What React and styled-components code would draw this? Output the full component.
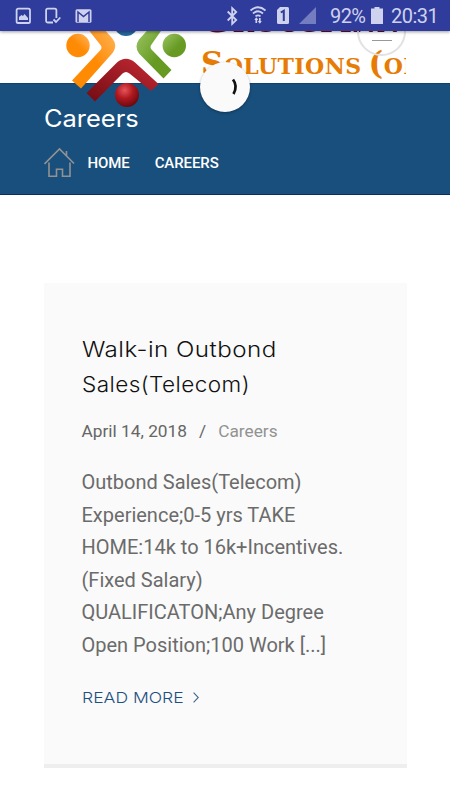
import styled, { createGlobalStyle } from "styled-components"

const App = () => {
  return (
    <>
      <GlobalStyle />
      <Screen>
        <StatusBar>
          <StatusIcons viewBox="0 0 110 31" width="110" height="31">
            <g fill="none" stroke="#ced2ee" strokeWidth="1.8">
              <rect x="16.6" y="8.6" width="13.4" height="14.4" rx="1.6" />
              <path d="M53 22.5h-5.3c-1 0-1.6-.5-1.6-1.5V10.2c0-1 .6-1.6 1.6-1.6h7.1c1 0 1.6.6 1.6 1.6V18" />
              <path d="M53.5 19.5l2.5 2.5 4.3-4.5" />
            </g>
            <path d="M19 20v-3l2.5-2 1.5 1 1.5-2 3.5 4v2z" fill="#ced2ee" />
            <rect x="75.5" y="9.3" width="16" height="13.5" rx="1.5" fill="#ced2ee" />
            <path d="M78 22V12l5.5 4.6L89 12v10" fill="none" stroke="#303c9b" strokeWidth="1.5" />
          </StatusIcons>
          <StatusRight>
            <svg viewBox="0 0 100 31" width="100" height="31">
              <path d="M2.7 11.5l8.5 8.5-4 3.8V8.2l4 3.8-8.5 8.5" fill="none" stroke="#ced2ee" strokeWidth="1.8" />
              <g fill="none" stroke="#ced2ee" strokeWidth="1.7">
                <path d="M25.5 10.5q7.5-6.5 15 0" />
                <path d="M28 13.5q5-4.5 10 0" />
                <path d="M30.5 16.3q2.5-2 5 0" />
                <path d="M31.3 23v-4.5M34.8 18v4.5" />
              </g>
              <path d="M29.3 20l2-2.7 2 2.7zM32.8 21l2 2.7 2-2.7z" fill="#ced2ee" />
              <path d="M55 7h7.5q1.5 0 1.5 1.5v14q0 1.5-1.5 1.5h-9q-1.5 0-1.5-1.5V10z" fill="#ced2ee" />
              <path d="M55.8 12.5l3-1.7V21" fill="none" stroke="#303c9b" strokeWidth="2" />
              <path d="M91 7v17H74z" fill="#737dc0" />
            </svg>
            <Percent>92%</Percent>
            <svg viewBox="0 0 12 31" width="12" height="31">
              <path d="M3.5 7h5v1.5H12V24H0V8.5h3.5z" fill="#ced2ee" />
            </svg>
            <Clock>20:31</Clock>
          </StatusRight>
        </StatusBar>

        <SiteHeader>
          <Logo>
            <LogoMark />
            <LogoText>
              <LogoLine $size={36.5} $color="#760812">Grouspinn</LogoLine>
              <LogoLine $size={31} $color="#e77c05">Solutions (or</LogoLine>
            </LogoText>
          </Logo>
          <MenuButton>
            <span />
          </MenuButton>
          <Loader>
            <svg viewBox="0 0 50 50" width="50" height="50">
              <path d="M33 17.5q5 6.5.5 14.5" fill="none" stroke="#111" strokeWidth="2.7" />
            </svg>
          </Loader>
        </SiteHeader>

        <PageTitle>
          <h1>
            <Wide $stretch={1.06}>Careers</Wide>
          </h1>
          <Breadcrumb>
            <svg viewBox="0 0 32 32" width="32" height="32" fill="none" stroke="#929292" strokeWidth="1.6">
              <path d="M.5 17L15.500 2 30 16.500M22.500 8.500V4" />
              <path d="M5 15.500v13.800h7.500v-7h6v7H26V15.500" />
            </svg>
            <Crumb>HOME</Crumb>
            <Crumb>CAREERS</Crumb>
          </Breadcrumb>
        </PageTitle>

        <Post>
          <PostTitle>
            <Wide $stretch={1.125}>Walk-in Outbond</Wide>
            <br />
            <Wide $stretch={1.05}>Sales(Telecom)</Wide>
          </PostTitle>
          <Meta>
            <span>April 14, 2018</span>
            <Slash>/</Slash>
            <Category>Careers</Category>
          </Meta>
          <Excerpt>
            Outbond Sales(Telecom) Experience;0-5 yrs TAKE HOME:14k to 16k+Incentives. (Fixed Salary)
            QUALIFICATON;Any Degree Open Position;100 Work [...]
          </Excerpt>
          <ReadMore>
            <Wide $stretch={1.17}>READ MORE</Wide>
            <svg viewBox="0 0 6 11" width="6" height="11" fill="none" stroke="#3b6790" strokeWidth="1.1">
              <path d="M.6.6l4.7 4.9L.6 10.4" />
            </svg>
          </ReadMore>
        </Post>
      </Screen>
    </>
  )
}

const LogoMark = () => (
  <Mark viewBox="0 0 126 80" width="126" height="80">
    <defs>
      <linearGradient id="orange" x1="0" y1="1" x2="1" y2="0">
        <stop offset="0.5" stopColor="#ff8b05" />
        <stop offset="1" stopColor="#ffb65c" />
      </linearGradient>
      <linearGradient id="green" x1="0" y1="0" x2="1" y2="1">
        <stop offset="0" stopColor="#9cc564" />
        <stop offset="0.6" stopColor="#669a22" />
      </linearGradient>
      <linearGradient id="red" x1="1" y1="0" x2="0" y2="1">
        <stop offset="0" stopColor="#c62a35" />
        <stop offset="1" stopColor="#720c12" />
      </linearGradient>
      <radialGradient id="redBall" cx="0.4" cy="0.3" r="0.7">
        <stop offset="0" stopColor="#e5555a" />
        <stop offset="0.5" stopColor="#b01820" />
        <stop offset="1" stopColor="#6c0a0e" />
      </radialGradient>
    </defs>
    <circle cx="61" cy="-7" r="12" fill="#24679c" />
    <circle cx="13" cy="14.5" r="11.7" fill="url(#orange)" />
    <path d="M22-3h16l9 10q6 7 1 14.5L16 57.5 7 49.5 35.5 19q2-2.5 0-5z" fill="url(#orange)" />
    <circle cx="109.3" cy="14.5" r="11.7" fill="url(#green)" />
    <path d="M98-3H84.5L74 8.500q-5 7 0 14L98.500 47.500l8-8.500L86.500 18.500q-2-2.500 0-5z" fill="url(#green)" />
    <path d="M21.5 62L52 31.500q9-7.500 18 0L93.500 53 86 60 64.500 42.500q-3.500-3-7 0L30 70.500z" fill="url(#red)" />
    <circle cx="62" cy="64" r="12" fill="url(#redBall)" />
  </Mark>
)

const GlobalStyle = createGlobalStyle`
  body {
    margin: 0;
    background-color: #fff;
    font-family: Roboto, sans-serif;
  }
`

const Screen = styled.div`
  width: 450px;
  height: 800px;
  overflow: hidden;
`

const Wide = styled.span`
  display: inline-block;
  transform: scaleX(${({ $stretch }) => $stretch});
  transform-origin: left center;
`

const StatusBar = styled.div`
  position: relative;
  z-index: 10;
  display: flex;
  justify-content: space-between;
  height: 31px;
  background-color: #303c9b;
  color: #ced2ee;
  box-shadow: 0 1px 3px #0006;
`

const StatusIcons = styled.svg`
  display: block;
`

const StatusRight = styled.div`
  display: flex;
  width: 225px;
  & svg {
    flex: none;
  }
`

const Percent = styled.span`
  width: 41px;
  margin-left: 5px;
  font-size: 20px;
  line-height: 33px;
  letter-spacing: -0.6px;
`

const Clock = styled.span`
  margin-left: 8px;
  font-size: 20px;
  line-height: 33px;
  letter-spacing: -0.5px;
`

const SiteHeader = styled.header`
  position: relative;
  height: 52px;
  background-color: #fff;
`

const Logo = styled.div`
  position: absolute;
  left: 65px;
  top: 0;
  z-index: 1;
  display: flex;
  width: 341px;
  height: 80px;
  overflow: hidden;
`

const Mark = styled.svg`
  flex: none;
`

const LogoText = styled.div`
  flex: none;
  margin: -31px 0 0 10px;
  font-family: "DejaVu Serif", serif;
  font-weight: bold;
`

const LogoLine = styled.div`
  height: 43px;
  line-height: 40px;
  font-size: ${({ $size }) => $size}px;
  font-variant: small-caps;
  letter-spacing: 0.4px;
  word-spacing: -4px;
  white-space: nowrap;
  color: ${({ $color }) => $color};
`

const MenuButton = styled.div`
  position: absolute;
  left: 357px;
  top: -24px;
  z-index: 2;
  display: flex;
  justify-content: center;
  box-sizing: border-box;
  width: 49px;
  height: 49px;
  border: 2px solid #e2e2e2;
  border-radius: 50%;
  & span {
    width: 20px;
    height: 1px;
    margin-top: 31px;
    background-color: #999;
  }
`

const Loader = styled.div`
  position: absolute;
  left: 200px;
  top: 31px;
  z-index: 3;
  width: 50px;
  height: 50px;
  border-radius: 50%;
  background-color: #fafafa;
  box-shadow: 0 1px 3px #0005;
`

const PageTitle = styled.section`
  box-sizing: border-box;
  height: 112px;
  padding: 20px 44px 0;
  border-top: 1px solid #123f6b;
  border-bottom: 1px solid #0b2c66;
  background-color: #194f7d;
  color: #fff;
  & h1 {
    position: relative;
    z-index: 2;
    margin: 0;
    font-family: Inter, sans-serif;
    font-size: 24px;
    font-weight: 400;
    line-height: 30px;
  }
`

const Breadcrumb = styled.nav`
  display: flex;
  align-items: center;
  margin-top: 13px;
`

const Crumb = styled.span`
  margin-left: 11.5px;
  font-size: 15px;
  font-weight: 500;
  letter-spacing: -0.1px;
  & + & {
    margin-left: 25px;
  }
`

const Post = styled.article`
  box-sizing: border-box;
  width: 363px;
  height: 485px;
  margin: 88px 0 0 44px;
  padding: 49px 37.5px 0;
  border-bottom: 4px solid #eee;
  background-color: #fafafa;
`

const PostTitle = styled.h2`
  margin: 0;
  font-family: Inter, sans-serif;
  font-size: 21.5px;
  font-weight: 300;
  line-height: 35px;
  letter-spacing: 0.4px;
  color: #111;
`

const Meta = styled.div`
  display: flex;
  margin-top: 18px;
  font-size: 17.3px;
  line-height: 22px;
  color: #666;
`

const Slash = styled.span`
  margin: 0 12px;
`

const Category = styled.span`
  color: #929292;
`

const Excerpt = styled.p`
  margin: 24px 0 0;
  font-size: 20px;
  line-height: 32.6px;
  color: #6b6b6b;
`

const ReadMore = styled.div`
  display: flex;
  align-items: center;
  gap: 25px;
  margin-top: 26px;
  font-family: Inter, sans-serif;
  font-size: 15px;
  font-weight: 300;
  line-height: 20px;
  color: #1d4f80;
`

export default App
